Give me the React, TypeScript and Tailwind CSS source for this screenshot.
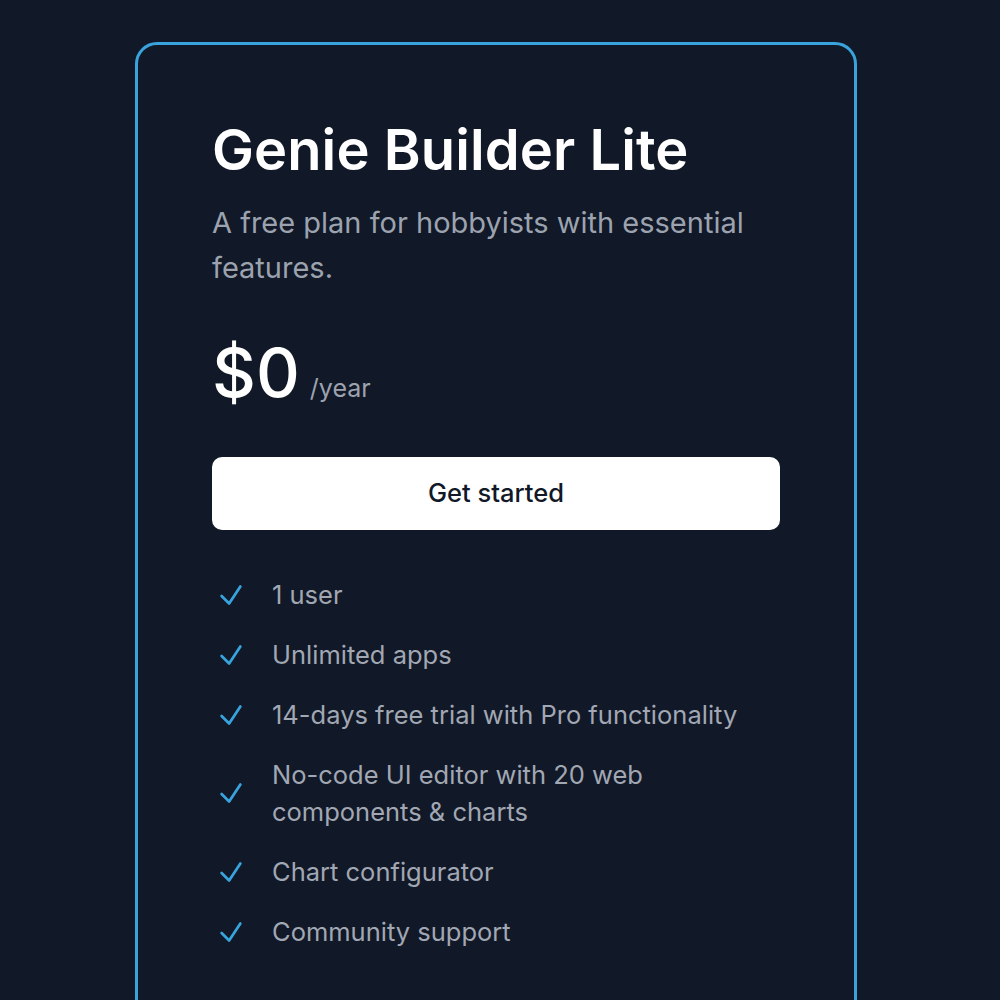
const FEATURES: string[] = [
  "1 user",
  "Unlimited apps",
  "14-days free trial with Pro functionality",
  "No-code UI editor with 20 web components & charts",
  "Chart configurator",
  "Community support",
];

function Check() {
  return (
    <svg
      viewBox="0 0 24 24"
      fill="none"
      stroke="currentColor"
      strokeWidth={2.2}
      strokeLinecap="round"
      strokeLinejoin="round"
      className="w-[30px] h-[30px] text-[#38a3dc] shrink-0"
    >
      <path d="M4.5 12.75l6 6 9-13.5" />
    </svg>
  );
}

export default function App() {
  return (
    <div className="min-h-screen bg-[#111827] flex pl-[135px] pt-[42px] overflow-hidden font-['Inter',sans-serif]">
      <div className="w-[722px] h-[1000px] shrink-0 rounded-[22px] border-[3px] border-[#38a3dc] bg-[#111827] px-[74px] pt-[71px]">
        {/* Header */}
        <h1 className="text-[56px] leading-[68px] font-semibold text-white tracking-[0.1px] whitespace-nowrap">
          Genie Builder Lite
        </h1>
        <p className="mt-[16px] text-[29px] leading-[45px] text-[#9ca3af]">
          A free plan for hobbyists with essential features.
        </p>

        {/* Price */}
        <div className="mt-[42px] flex items-baseline gap-[10px]">
          <span className="text-[68px] leading-[80px] font-medium text-white">$0</span>
          <span className="text-[25px] text-[#9ca3af]">/year</span>
        </div>

        {/* CTA */}
        <button className="mt-[45px] w-full h-[73px] rounded-[10px] bg-white text-[25.5px] font-medium text-[#111827]">
          Get started
        </button>

        {/* Features */}
        <ul className="mt-[46px] flex flex-col gap-[23px]">
          {FEATURES.map((f) => (
            <li key={f} className="flex items-center gap-[26px] pl-[4px]">
              <Check />
              <span className="text-[25.5px] leading-[37px] text-[#a1a7b3]">{f}</span>
            </li>
          ))}
        </ul>
      </div>
    </div>
  );
}
